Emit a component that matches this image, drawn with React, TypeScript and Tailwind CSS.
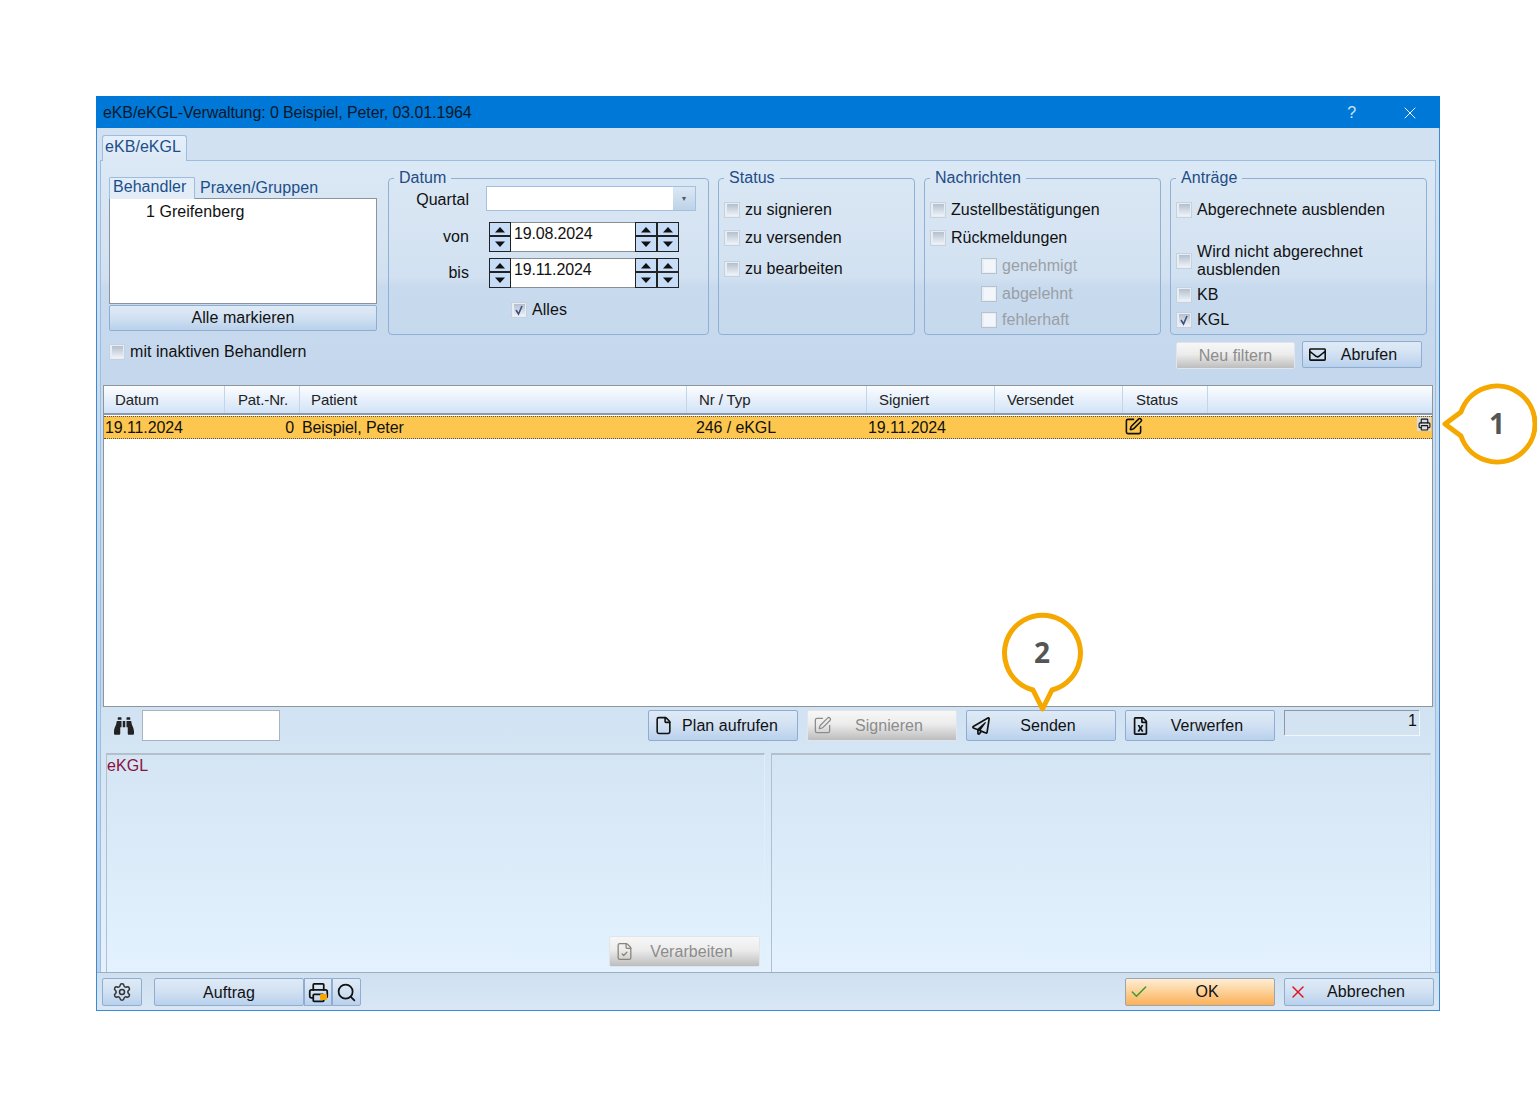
import React from "react";
import { Check, File, FileCheck, Printer, Search, Settings, SquarePen, X } from "lucide-react";
import { FaBinoculars, FaRegEnvelope, FaRegFileExcel, FaRegPaperPlane } from "react-icons/fa";

const blueBtn = "bg-[linear-gradient(to_bottom,#dfeaf6,#d3e2f3_45%,#b9d1ec)] border-[#8fadd0] text-[#111]";
const greyBtn = "bg-[linear-gradient(to_bottom,#f7f7f7,#ececec_45%,#bdbdbd)] border-[#dfe5ea] text-[#8c8c8c]";
const orangeBtn = "bg-[linear-gradient(to_bottom,#ffedd6,#fdd9a8_35%,#fbb058)] border-[#9aa5b0] text-[#111]";

type BtnProps = {
  label: string;
  icon: React.ReactNode;
  className?: string;
};

const IconButton = ({ label, icon, className = "" }: BtnProps) => (
  <div className={`flex items-center rounded-[2px] border pl-[4px] pr-[10px] ${className}`}>
    <span className="flex w-[20px] shrink-0 items-center justify-center">{icon}</span>
    <span className="flex-1 text-center">{label}</span>
  </div>
);

const CheckBox = ({ checked, disabled }: { checked?: boolean; disabled?: boolean }) => (
  <span
    className={`relative flex h-[16px] w-[16px] shrink-0 items-center justify-center border ${
      disabled ? "border-[#b9c2cc] bg-[#e8eef5]" : "border-[#c6d1dd] bg-[#e6edf5]"
    }`}
  >
    <span
      className={`block h-[12px] w-[11px] ${
        disabled ? "bg-[#f2f6fa]" : "bg-[linear-gradient(to_bottom,#b4bfce,#eef3f8)]"
      }`}
    />
    {checked && (
      <svg viewBox="0 0 12 12" className="absolute h-[12px] w-[12px]">
        <path d="M3 6l2.500 4L9 2" fill="none" stroke="#3f4f80" strokeWidth="1.600" />
      </svg>
    )}
  </span>
);

const CheckRow = ({
  label,
  checked,
  disabled,
  className = "",
}: {
  label: React.ReactNode;
  checked?: boolean;
  disabled?: boolean;
  className?: string;
}) => (
  <div className={`flex items-center gap-[5px] leading-[18px] ${disabled ? "text-[#9a9fa5]" : ""} ${className}`}>
    <CheckBox checked={checked} disabled={disabled} />
    <span>{label}</span>
  </div>
);

const Group = ({
  title,
  className = "",
  bodyClass = "",
  children,
}: {
  title: string;
  className?: string;
  bodyClass?: string;
  children: React.ReactNode;
}) => (
  <fieldset className={`h-[167px] shrink-0 rounded-[4px] border border-[#8fb1d6] ${className}`}>
    <legend className="ml-[5px] px-[5px] leading-[20px] text-[#1f4c86]">{title}</legend>
    <div className={bodyClass}>{children}</div>
  </fieldset>
);

const Spin = () => (
  <div className="flex h-[30px] w-[22px] shrink-0 flex-col border border-[#222] bg-[#c6dcf7]">
    <div className="flex h-[14px] items-center justify-center border-b-2 border-[#222]">
      <svg viewBox="0 0 12 7" className="h-[7px] w-[12px]">
        <path d="M1 6.500L6 1l5 5.500z" fill="#111" />
      </svg>
    </div>
    <div className="flex flex-1 items-center justify-center">
      <svg viewBox="0 0 12 7" className="h-[7px] w-[12px]">
        <path d="M1 .5L6 6l5-5.500z" fill="#111" />
      </svg>
    </div>
  </div>
);

const DateRow = ({ label, value, className = "" }: { label: string; value: string; className?: string }) => (
  <div className={`flex items-center ${className}`}>
    <span className="w-[80px] text-right">{label}</span>
    <div className="ml-[20px] flex">
      <Spin />
      <div className="h-[30px] w-[124px] border-y border-[#8a8f96] bg-white pl-[3px] leading-[22px] tracking-[-0.15px]">
        {value}
      </div>
      <Spin />
      <Spin />
    </div>
  </div>
);

const columns = [
  { label: "Datum", cls: "w-[121px] pl-[11px]" },
  { label: "Pat.-Nr.", cls: "w-[75px] pr-[11px] text-right" },
  { label: "Patient", cls: "w-[387px] pl-[11px]" },
  { label: "Nr / Typ", cls: "w-[180px] pl-[12px]" },
  { label: "Signiert", cls: "w-[128px] pl-[12px]" },
  { label: "Versendet", cls: "w-[128px] pl-[12px]" },
  { label: "Status", cls: "w-[85px] pl-[13px]" },
];

export default function App() {
  return (
    <div className="relative h-[1108px] w-[1537px] overflow-hidden bg-white pl-[96px] pt-[96px] font-['Liberation_Sans',Arial,sans-serif] text-[16px] leading-[20px] tracking-[0.05px] text-[#111]">
      <div className="flex h-[915px] w-[1344px] flex-col border-x border-b border-x-[#3b8ad6] border-b-[#3b8ad6] bg-[linear-gradient(to_bottom,#d3e2f2,#bcd2ea)]">
        {/* Title bar */}
        <div className="-mx-px flex h-[32px] shrink-0 items-center bg-[#0078d7] pl-[7px] pr-[20px] pt-px tracking-[-0.1px] text-[#08182c]">
          <span>eKB/eKGL-Verwaltung: 0 Beispiel, Peter, 03.01.1964</span>
          <span className="ml-auto text-[#cfe4f7]">?</span>
          <X className="ml-[44px] h-[20px] w-[20px] text-white" strokeWidth={1.2} />
        </div>

        {/* Tab strip */}
        <div className="relative z-10 flex h-[32px] shrink-0 items-end pl-[5px]">
          <div className="-mb-px h-[26px] w-[85px] rounded-t-[3px] border border-b-0 border-[#9dbde0] bg-[linear-gradient(to_bottom,#e6f0fa,#dbe8f5)] pl-[2px] leading-[22px] text-[#1c4f8a]">
            eKB/eKGL
          </div>
        </div>

        <div className="mx-[3px] flex flex-1 flex-col border-x border-t border-[#9dbde0]">
          {/* Filters */}
          <div className="flex h-[224px] shrink-0 items-start bg-[linear-gradient(to_bottom,#dbe8f5,#d2e1f1_52%,#c8daee_56%,#c4d7ec)] pl-[8px] pt-[7px]">
            <div className="w-[268px] shrink-0 pt-[8px]">
              <div className="flex h-[22px] items-end">
                <div className="-mb-px h-[22px] w-[86px] rounded-t-[2px] border border-b-0 border-[#9dbde0] bg-[#e2edf8] pl-[3px] leading-[17px] text-[#1c4f8a]">
                  Behandler
                </div>
                <span className="ml-[5px] leading-[20px] text-[#1c4f8a]">Praxen/Gruppen</span>
              </div>
              <div className="h-[106px] border border-[#8b949e] bg-white pl-[36px] pt-[3px]">1 Greifenberg</div>
              <div className={`mt-px h-[26px] rounded-[2px] border text-center leading-[24px] ${blueBtn}`}>Alle markieren</div>
              <CheckRow className="mt-[12px]" label="mit inaktiven Behandlern" />
            </div>

            <Group title="Datum" className="ml-[11px] w-[321px]">
              <div className="-mt-[2px] flex items-center">
                <span className="w-[80px] pt-[3px] text-right">Quartal</span>
                <div className="ml-[17px] flex h-[25px] w-[210px] border border-[#a3c0e0] bg-white">
                  <div className="ml-auto flex w-[22px] items-center justify-center bg-[linear-gradient(to_bottom,#dce8f4,#bdd2e8)] text-[8px] text-[#555]">
                    ▾
                  </div>
                </div>
              </div>
              <DateRow className="mt-[11px]" label="von" value="19.08.2024" />
              <DateRow className="mt-[6px]" label="bis" value="19.11.2024" />
              <CheckRow className="ml-[122px] mt-[13px]" label="Alles" checked />
            </Group>

            <Group title="Status" className="ml-[9px] w-[197px]" bodyClass="pl-[5px] pt-[13px]">
              <CheckRow label="zu signieren" />
              <CheckRow className="mt-[10px]" label="zu versenden" />
              <CheckRow className="mt-[13px]" label="zu bearbeiten" />
            </Group>

            <Group title="Nachrichten" className="ml-[9px] w-[237px]" bodyClass="pl-[5px] pt-[13px]">
              <CheckRow label="Zustellbestätigungen" />
              <CheckRow className="mt-[10px]" label="Rückmeldungen" />
              <CheckRow className="ml-[51px] mt-[10px]" label="genehmigt" disabled />
              <CheckRow className="ml-[51px] mt-[10px]" label="abgelehnt" disabled />
              <CheckRow className="ml-[51px] mt-[8px]" label="fehlerhaft" disabled />
            </Group>

            <div className="ml-[9px] w-[257px] shrink-0">
              <Group title="Anträge" className="w-full" bodyClass="pl-[5px] pt-[13px]">
                <CheckRow label="Abgerechnete ausblenden" />
                <CheckRow
                  className="mt-[24px]"
                  label={
                    <>
                      Wird nicht abgerechnet
                      <br />
                      ausblenden
                    </>
                  }
                />
                <CheckRow className="mt-[7px]" label="KB" />
                <CheckRow className="mt-[7px]" label="KGL" checked />
              </Group>
              <div className="mt-[6px] flex items-start pl-[6px]">
                <div className={`mt-px h-[27px] w-[119px] rounded-[2px] border text-center leading-[26px] ${greyBtn}`}>
                  Neu filtern
                </div>
                <IconButton
                  label="Abrufen"
                  className={`ml-[7px] h-[27px] w-[120px] ${blueBtn}`}
                  icon={<FaRegEnvelope className="h-[17px] w-[17px]" />}
                />
              </div>
            </div>
          </div>

          {/* Table */}
          <div className="ml-[2px] flex h-[322px] w-[1330px] shrink-0 flex-col border border-[#8d959d] bg-white">
            <div className="flex h-[29px] shrink-0 items-stretch border-b-[2px] border-[#8d99a6] bg-[linear-gradient(to_bottom,#fbfdff,#d2e3f7)] text-[15px] leading-[28px] tracking-[-0.1px] text-[#222]">
              {columns.map((col) => (
                <div key={col.label} className={`shrink-0 border-r border-[#c3d5e8] ${col.cls}`}>
                  {col.label}
                </div>
              ))}
            </div>
            <div className="mt-px flex h-[23px] shrink-0 items-center border-y border-dotted border-[#555] bg-[#fdc64e] leading-[22px] tracking-[-0.1px]">
              <span className="w-[102px] shrink-0 pl-px">19.11.2024</span>
              <span className="w-[88px] shrink-0 text-right">0</span>
              <span className="ml-[8px] w-[394px] shrink-0">Beispiel, Peter</span>
              <span className="w-[172px] shrink-0">246 / eKGL</span>
              <span className="w-[256px] shrink-0">19.11.2024</span>
              <SquarePen className="-mt-[3px] h-[19px] w-[19px]" strokeWidth={2} />
              <span className="ml-auto -mt-[7px] mr-[1px] flex h-[14px] w-[14px] items-center justify-center bg-[#d9dde2]">
                <Printer className="h-[13px] w-[13px]" strokeWidth={2} />
              </span>
            </div>
          </div>

          {/* Lower area */}
          <div className="flex flex-1 flex-col bg-[linear-gradient(to_bottom,#d1e2f2,#e3f2fe)]">
            <div className="flex h-[46px] shrink-0 items-start pl-[12px] pt-[3px]">
              <FaBinoculars className="mt-[6px] h-[20px] w-[22px] text-[#222]" />
              <div className="ml-[7px] h-[31px] w-[138px] border border-[#a9b3bd] bg-white" />
              <IconButton
                label="Plan aufrufen"
                className={`ml-[368px] h-[31px] w-[150px] ${blueBtn}`}
                icon={<File className="h-[19px] w-[19px]" strokeWidth={2} />}
              />
              <IconButton
                label="Signieren"
                className={`ml-[9px] h-[31px] w-[150px] ${greyBtn}`}
                icon={<SquarePen className="h-[19px] w-[19px]" strokeWidth={1.6} />}
              />
              <IconButton
                label="Senden"
                className={`ml-[9px] h-[31px] w-[150px] ${blueBtn}`}
                icon={<FaRegPaperPlane className="h-[18px] w-[18px]" />}
              />
              <IconButton
                label="Verwerfen"
                className={`ml-[9px] h-[31px] w-[150px] ${blueBtn}`}
                icon={<FaRegFileExcel className="h-[18px] w-[15px]" />}
              />
              <div className="ml-[9px] h-[25px] w-[135px] border-l border-t border-[#8f98a2] bg-[#d4e3f1] pr-[2px] text-right leading-[20px] shadow-[1px_1px_0_#f0f6fc]">
                1
              </div>
            </div>

            <div className="flex flex-1 gap-[6px] pl-[5px]">
              <div className="flex w-[659px] flex-col border-l border-r border-t-2 border-[#b3bfcb] border-r-[#e4eef8] pt-px text-[#8c1040]">
                <span className="leading-[20px]">eKGL</span>
                <div className="mt-auto mb-[5px] mr-[4px] self-end">
                  <IconButton
                    label="Verarbeiten"
                    className={`h-[31px] w-[151px] ${greyBtn}`}
                    icon={<FileCheck className="h-[19px] w-[19px] text-[#8a8474]" strokeWidth={1.6} />}
                  />
                </div>
              </div>
              <div className="w-[660px] border-l border-r border-t-2 border-[#b3bfcb] border-r-[#d3e1ee]" />
            </div>
          </div>
        </div>

        {/* Footer */}
        <div className="flex h-[38px] shrink-0 items-start border-t border-[#a1afbd] bg-[linear-gradient(to_bottom,#cfe0f1,#d9e7f5)] pl-[5px] pr-[5px] pt-[5px]">
          <div className={`flex h-[28px] w-[40px] items-center justify-center rounded-[2px] border ${blueBtn}`}>
            <Settings className="h-[20px] w-[20px] text-[#333]" strokeWidth={1.8} />
          </div>
          <div className={`ml-[12px] h-[28px] w-[150px] rounded-[2px] border text-center leading-[27px] ${blueBtn}`}>Auftrag</div>
          <div className={`relative flex h-[28px] w-[28px] items-center justify-center border ${blueBtn}`}>
            <Printer className="h-[21px] w-[21px]" strokeWidth={2} />
            <span className="absolute bottom-[5px] right-[4px] h-[6px] w-[7px] rounded-[1px] bg-[#f5a800]" />
          </div>
          <div className={`flex h-[28px] w-[29px] items-center justify-center rounded-r-[2px] border ${blueBtn}`}>
            <Search className="h-[21px] w-[21px]" strokeWidth={2} />
          </div>
          <IconButton
            label="OK"
            className={`ml-auto h-[28px] w-[150px] ${orangeBtn}`}
            icon={<Check className="h-[24px] w-[24px] -translate-x-[1px] text-[#3d9a2c]" strokeWidth={1.8} />}
          />
          <IconButton
            label="Abbrechen"
            className={`ml-[9px] h-[28px] w-[150px] ${blueBtn}`}
            icon={<X className="h-[24px] w-[24px] -translate-x-[1px] text-[#e0141e]" strokeWidth={1.8} />}
          />
        </div>
      </div>

      {/* Callouts drawn over the screenshot */}
      <svg className="pointer-events-none absolute left-0 top-0" width="1537" height="1108">
        <path
          d="M1461 412 A38 38 0 1 1 1461 436 L1445 424 Z"
          fill="#fff"
          stroke="#f5a800"
          strokeWidth="5"
          strokeLinejoin="round"
        />
        <path
          d="M1033 690 A38 38 0 1 1 1052 690 L1042.500 709 Z"
          fill="#fff"
          stroke="#f5a800"
          strokeWidth="5"
          strokeLinejoin="round"
        />
        <text x="1497" y="434" textAnchor="middle" fontFamily="Open Sans, sans-serif" fontWeight="700" fontSize="28" fill="#555">
          1
        </text>
        <text x="1042" y="663" textAnchor="middle" fontFamily="Open Sans, sans-serif" fontWeight="700" fontSize="28" fill="#555">
          2
        </text>
      </svg>
    </div>
  );
}
